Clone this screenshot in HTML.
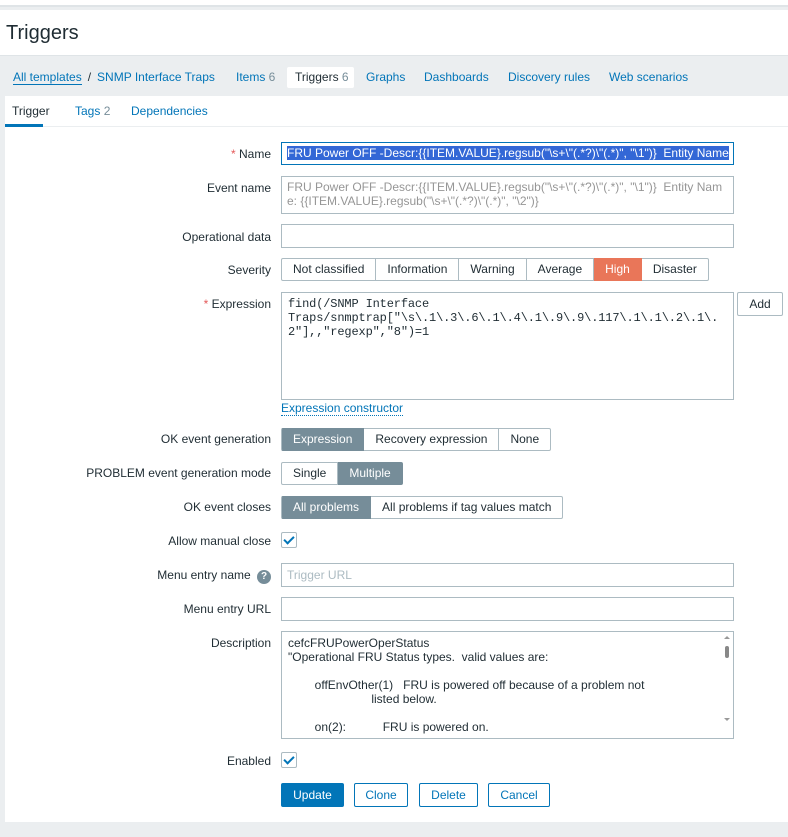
<!DOCTYPE html>
<html><head><meta charset="utf-8"><style>
*{box-sizing:border-box;margin:0;padding:0}
body{width:788px;height:837px;background:#ebeef0;font-family:"Liberation Sans",Arial,sans-serif;font-size:12px;color:#1f2c33;position:relative;overflow:hidden}
.a{position:absolute}
.lbl{position:absolute;right:517px;text-align:right;white-space:nowrap}
.inp{position:absolute;left:281px;width:453px;border:1px solid #acbbc2;background:#fff}
.seg{position:absolute;display:flex;height:23px}
.seg div{border:1px solid #acbbc2;border-left:none;padding:0 11px;line-height:21px;background:#fff;white-space:nowrap}
.seg div:first-child{border-left:1px solid #acbbc2;border-radius:2px 0 0 2px}
.seg div:last-child{border-radius:0 2px 2px 0}
.seg .on{background:#768d99;color:#fff;border-color:#768d99}
.cb{position:absolute;left:281px;width:16px;height:16px;border:1px solid #acbbc2;border-radius:2px;background:#fff}
.cb:after{content:"";position:absolute;left:4px;top:1px;width:4px;height:8px;border:solid #0275b8;border-width:0 2px 2px 0;transform:rotate(45deg)}
.btn{position:absolute;top:783px;height:24px;border:1px solid #0275b8;border-radius:2px;color:#0275b8;background:#fff;text-align:center;line-height:22px}
.lnk{color:#0275b8}
</style></head><body>
<div class="a" style="left:0;top:0;width:788px;height:5px;background:#fff"></div>
<div class="a" style="left:0;top:5px;width:788px;height:2px;background:#dfe4e7"></div>
<div class="a" style="left:0;top:10px;width:788px;height:45px;background:#fff"></div>
<div class="a" style="left:6px;top:22px;font-size:20px;color:#1f2c33">Triggers</div>
<div class="a" style="left:0;top:55px;width:788px;height:1px;background:#dfe4e7"></div>
<div class="a" style="left:287px;top:67px;width:67px;height:21px;background:#fff;border-radius:2px"></div>
<div class="a" style="top:70px;left:13px;white-space:nowrap">
<span class="lnk" style="border-bottom:1px solid #0275b8">All templates</span><span style="margin:0 6px">/</span><span class="lnk">SNMP Interface Traps</span>
</div>
<div class="a lnk" style="top:70px;left:236px">Items <span style="color:#768d99">6</span></div>
<div class="a" style="top:70px;left:295px">Triggers <span style="color:#768d99">6</span></div>
<div class="a lnk" style="top:70px;left:366px">Graphs</div>
<div class="a lnk" style="top:70px;left:424px">Dashboards</div>
<div class="a lnk" style="top:70px;left:508px">Discovery rules</div>
<div class="a lnk" style="top:70px;left:609px">Web scenarios</div>

<div class="a" style="left:5px;top:96px;width:783px;height:726px;background:#fff"></div>
<div class="a" style="left:5px;top:126px;width:783px;height:1px;background:#ebeef0"></div>
<div class="a" style="left:5px;top:124px;width:38px;height:3px;background:#0275b8"></div>
<div class="a" style="left:12px;top:104px">Trigger</div>
<div class="a lnk" style="left:75px;top:104px">Tags <span style="color:#768d99">2</span></div>
<div class="a lnk" style="left:131px;top:104px">Dependencies</div>

<div class="lbl" style="top:147px"><span style="color:#e45959">*</span> Name</div>
<div class="inp" style="top:142px;height:23px;border:1px solid #0275b8;padding:3px 5px;overflow:hidden;white-space:nowrap"><span style="background:#3367d6;color:#fff">FRU Power OFF -Descr:{{ITEM.VALUE}.regsub("\s+\"(.*?)\"(.*)", "\1")}&nbsp; Entity Name</span></div>

<div class="lbl" style="top:181px">Event name</div>
<div class="inp" style="top:176px;height:38px;padding:3px 5px;color:#969696;line-height:14px;white-space:nowrap">FRU Power OFF -Descr:{{ITEM.VALUE}.regsub("\s+\"(.*?)\"(.*)", "\1")}&nbsp; Entity Nam<br>e: {{ITEM.VALUE}.regsub("\s+\"(.*?)\"(.*)", "\2")}</div>

<div class="lbl" style="top:230px">Operational data</div>
<div class="inp" style="top:224px;height:24px"></div>

<div class="lbl" style="top:263px">Severity</div>
<div class="seg" style="left:281px;top:258px"><div>Not classified</div><div>Information</div><div>Warning</div><div>Average</div><div style="background:#e97659;color:#fff;border-color:#e97659">High</div><div>Disaster</div></div>

<div class="lbl" style="top:297px"><span style="color:#e45959">*</span> Expression</div>
<div class="inp" style="top:292px;height:108px;padding:4px 6px;font-family:'Liberation Mono',monospace;font-size:12px;line-height:14px;white-space:nowrap;overflow:hidden;letter-spacing:-0.15px">find(/SNMP Interface<br>Traps/snmptrap["\s\.1\.3\.6\.1\.4\.1\.9\.9\.117\.1\.1\.2\.1\.<br>2"],,"regexp","8")=1</div>
<div class="a" style="left:737px;top:292px;width:46px;height:24px;border:1px solid #acbbc2;border-radius:2px;text-align:center;line-height:22px">Add</div>
<div class="a lnk" style="left:281px;top:401px;border-bottom:1px dotted #0275b8">Expression constructor</div>

<div class="lbl" style="top:432px">OK event generation</div>
<div class="seg" style="left:281px;top:428px"><div class="on">Expression</div><div>Recovery expression</div><div>None</div></div>

<div class="lbl" style="top:466px">PROBLEM event generation mode</div>
<div class="seg" style="left:281px;top:462px"><div>Single</div><div class="on">Multiple</div></div>

<div class="lbl" style="top:500px">OK event closes</div>
<div class="seg" style="left:281px;top:496px"><div class="on">All problems</div><div>All problems if tag values match</div></div>

<div class="lbl" style="top:534px">Allow manual close</div>
<div class="cb" style="top:532px"></div>

<div class="lbl" style="top:568px">Menu entry name <span style="display:inline-block;width:14px;height:14px;border-radius:50%;background:#768d99;color:#fff;font-size:10px;font-weight:bold;text-align:center;line-height:14px;margin-left:3px">?</span></div>
<div class="inp" style="top:563px;height:24px;padding:4px 5px;color:#acbbc2">Trigger URL</div>

<div class="lbl" style="top:602px">Menu entry URL</div>
<div class="inp" style="top:597px;height:24px"></div>

<div class="lbl" style="top:636px">Description</div>
<div class="inp" style="top:631px;height:108px;padding:4px 6px;line-height:14px;overflow:hidden;white-space:pre">cefcFRUPowerOperStatus
"Operational FRU Status types.  valid values are:

        offEnvOther(1)   FRU is powered off because of a problem not
                         listed below.

        on(2):           FRU is powered on.</div>
<div class="a" style="left:724px;top:636px;width:0;height:0;border-left:3px solid transparent;border-right:3px solid transparent;border-bottom:3px solid #999"></div>
<div class="a" style="left:725px;top:646px;width:4px;height:12px;background:#888;border-radius:2px"></div>
<div class="a" style="left:724px;top:718px;width:0;height:0;border-left:3px solid transparent;border-right:3px solid transparent;border-top:3px solid #999"></div>

<div class="lbl" style="top:754px">Enabled</div>
<div class="cb" style="top:752px"></div>

<div class="btn" style="left:281px;width:63px;background:#0275b8;color:#fff">Update</div>
<div class="btn" style="left:354px;width:54px">Clone</div>
<div class="btn" style="left:419px;width:59px">Delete</div>
<div class="btn" style="left:488px;width:62px">Cancel</div>
</body></html>
